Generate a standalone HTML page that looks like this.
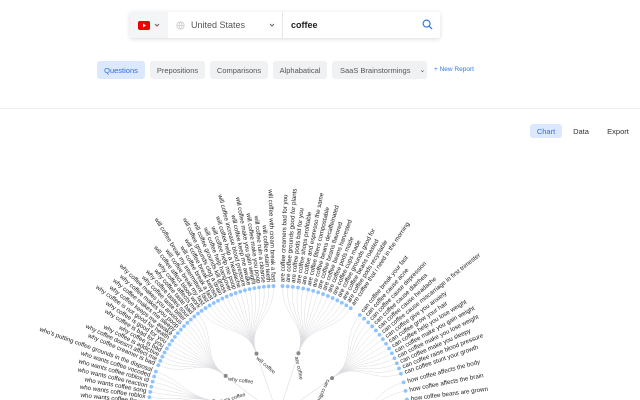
<!DOCTYPE html>
<html><head><meta charset="utf-8"><style>
*{margin:0;padding:0;box-sizing:border-box}
html,body{width:640px;height:400px;overflow:hidden}
body{background:#fff;font-family:"Liberation Sans",sans-serif;position:relative}
.search{position:absolute;left:130px;top:12px;width:310px;height:26px;background:#fff;box-shadow:0 1px 5px rgba(0,0,0,.15);border-radius:2px;display:flex;font-size:9px;color:#333;white-space:nowrap}
.yt{width:38px;background:#f4f5f7;display:flex;align-items:center;padding-left:8px}
.ct{width:115px;border-right:1px solid #e5e7eb;display:flex;align-items:center;padding-left:8px;color:#555;position:relative}
.in{flex:1;display:flex;align-items:center;padding-left:8px;font-weight:bold;color:#222;position:relative}
.tab{position:absolute;top:61px;height:18px;background:#f0f1f3;border-radius:3px;font-size:7.5px;color:#555;display:flex;align-items:center;justify-content:center;white-space:nowrap}
.sel{background:#dbe8fd;color:#2f6be0}
.hr{position:absolute;left:0;right:0;top:108px;height:1px;background:#eceef1}
.bt{position:absolute;top:124px;height:14px;font-size:7.5px;color:#333;display:flex;align-items:center;justify-content:center;border-radius:3px}
</style></head><body>
<div class="search">
<div class="yt"><svg width="12" height="9" viewBox="0 0 12 9"><rect width="12" height="9" rx="2" fill="#e00"/><path d="M5 2.5L8 4.5 5 6.5z" fill="#fff"/></svg><svg width="8" height="8" viewBox="0 0 8 8" style="margin-left:3px"><path d="M2 3l2 2 2-2" stroke="#666" fill="none"/></svg></div>
<div class="ct"><svg width="9" height="9" viewBox="0 0 10 10"><circle cx="5" cy="5" r="4" fill="none" stroke="#ccc"/><path d="M1 5h8M5 1c-2 2-2 6 0 8M5 1c2 2 2 6 0 8" stroke="#ccc" fill="none" stroke-width=".7"/></svg><span style="margin-left:6px">United States</span><svg width="8" height="8" viewBox="0 0 8 8" style="position:absolute;right:6px;top:9px"><path d="M2 3l2 2 2-2" stroke="#666" fill="none"/></svg></div>
<div class="in">coffee<svg width="11" height="11" viewBox="0 0 12 12" style="position:absolute;right:7px;top:7px"><circle cx="5" cy="5" r="3.8" stroke="#2f7ae5" stroke-width="1.3" fill="none"/><path d="M8 8l3 3" stroke="#2f7ae5" stroke-width="1.4"/></svg></div>
</div>
<div class="tab sel" style="left:97px;width:48px">Questions</div>
<div class="tab" style="left:150px;width:55px">Prepositions</div>
<div class="tab" style="left:210px;width:58px">Comparisons</div>
<div class="tab" style="left:273px;width:54px">Alphabatical</div>
<div class="tab" style="left:332px;width:95px;justify-content:flex-start;padding-left:8px">SaaS Brainstormings<span style="margin-left:9px;font-size:7px">⌄</span></div>
<div style="position:absolute;left:434px;top:66px;font-size:6.5px;color:#2f7ae5;white-space:nowrap">+ New Report</div>
<div class="hr"></div>
<div class="bt sel" style="left:530px;width:32px;background:#dbe8fd;color:#2f6be0">Chart</div>
<div class="bt" style="left:568px;width:26px">Data</div>
<div class="bt" style="left:604px;width:28px">Export</div>
<svg id="c" width="640" height="400" style="position:absolute;left:0;top:0;overflow:hidden"></svg>
<script>
var cx=278,cy=416,R=130,rb=66;
var G=[
["who's coffee",-174,-160,["who wants coffee flavor","who wants coffee roblox","who wants coffee song","who wants coffee reaction","who wants coffee roblox id","who wants coffee vocoded","who's putting coffee grounds in the disposal"]],
["why coffee",-157,-128,["why coffee creamer is bad","why coffee doesn't affect me","why coffee is addictive","why coffee is bad","why coffee is bad for you","why coffee is good for you","why coffee is not good for health","why coffee keeps me awake","why coffee makes me sleepy","why coffee makes you poop","why coffee makes you anxious","why coffee taste bitter","why coffee tastes sour","why coffee taste bad","why coffee affects me"]],
["will coffee",-126,-92,["will coffee affect blood work","will coffee break my fast","will coffee break my intermittent fast","will coffee break a fast","will coffee break ketosis","will coffee grounds clog a drain","will coffee grounds kill grass","will coffee help hangover","will coffee help me poop","will coffee help a headache","will coffee increase blood pressure","will coffee keep me awake","will coffee make you gain weight","will coffee make you poop","will coffee ruin a cleanse","will coffee stain teeth","will coffee with cream break a fast"]],
["are coffee",-88,-56,["are coffee creamers bad for you","are coffee grounds good for plants","are coffee pods bad for you","are coffee shops profitable","are coffee and espresso the same","are coffee filters compostable","are coffee beans decaffeinated","are coffee beans flavored","are coffee beans harvested","are coffee pods made","are coffee cups made","are coffee grounds good for","are coffee beans roasted","are coffee pods recyclable","are coffee that i need in the morning"]],
["can coffee",-51,-19,["can coffee break your fast","can coffee cause acne","can coffee cause depression","can coffee cause diarrhea","can coffee cause headache","can coffee cause miscarriage in first trimester","can coffee give you anxiety","can coffee grow your hair","can coffee help you lose weight","can coffee make you gain weight","can coffee make you lose weight","can coffee make you sleepy","can coffee raise blood pressure","can coffee stunt your growth"]],
["how coffee",-15,12,["how coffee affects the body","how coffee affects the brain","how coffee beans are grown","how coffee beans are roasted","how coffee cups are made","how coffee is made","how coffee is grown","how coffee works"]]
];
var s='',t='',d=Math.PI/180;
function P(a,r){return [cx+r*Math.cos(a*d),cy+r*Math.sin(a*d)];}
G.forEach(function(g){
 var n=g[3].length,m=(g[1]+g[2])/2,b=P(m,rb);
 s+='<path d="M'+cx+','+cy+'L'+b[0]+','+b[1]+'" stroke="#ddd" fill="none" stroke-width=".6"/>';
 for(var i=0;i<n;i++){
  var a=g[1]+(g[2]-g[1])*i/(n-1),p=P(a,R),q=P(a,(R+rb)/2),q2=P(m,(R+rb)/2);
  s+='<path d="M'+b[0]+','+b[1]+'C'+q2[0]+','+q2[1]+' '+q[0]+','+q[1]+' '+p[0]+','+p[1]+'" stroke="#dcdce0" fill="none" stroke-width=".5"/>';
  t+='<circle cx="'+p[0]+'" cy="'+p[1]+'" r="1.9" fill="#8ec3ff"/>';
  var l=P(a,R+4),left=(a<-90||a>90);
  var rot=left?a+180:a;
  t+='<text x="'+l[0]+'" y="'+l[1]+'" font-size="6.2" fill="#222" dominant-baseline="middle" text-anchor="'+(left?'end':'start')+'" transform="rotate('+rot+' '+l[0]+' '+l[1]+')">'+g[3][i].replace("'","&#39;")+'</text>';
 }
 t+='<circle cx="'+b[0]+'" cy="'+b[1]+'" r="2" fill="#888"/>';
 t+='<text x="'+(b[0]+3)+'" y="'+(b[1]+1)+'" font-size="5.3" fill="#333" dominant-baseline="hanging" transform="rotate('+(m+150)+' '+b[0]+' '+b[1]+')">'+g[0]+'</text>';
});
document.getElementById('c').innerHTML=s+t;
</script>
</body></html>
